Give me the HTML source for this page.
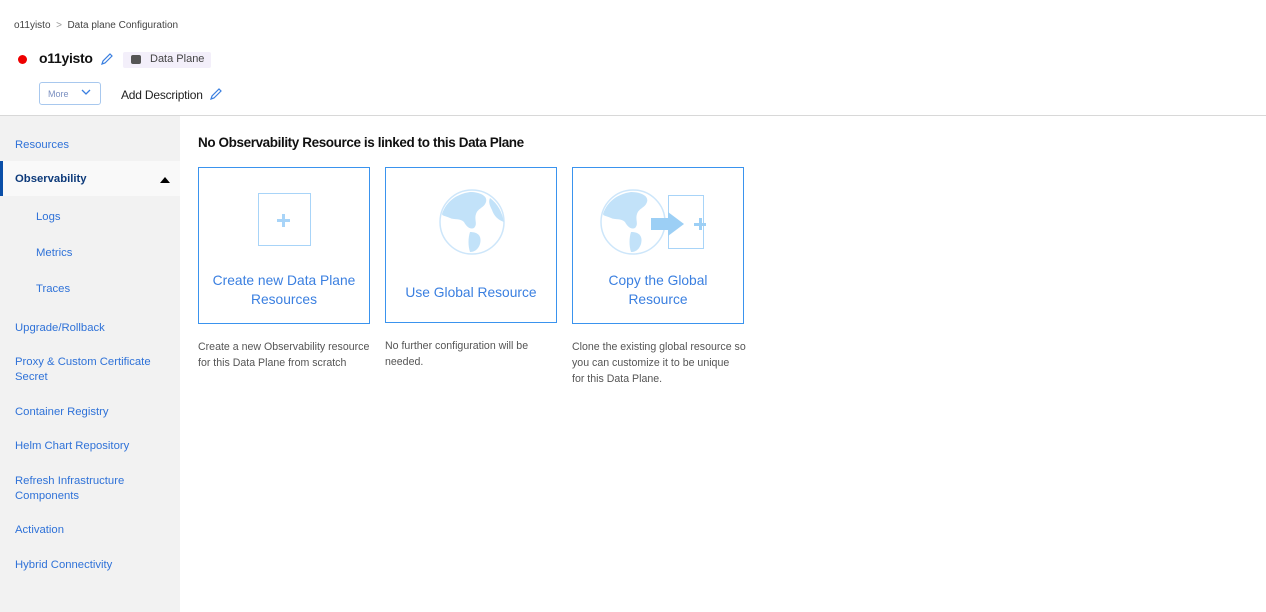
<!DOCTYPE html>
<html><head><meta charset="utf-8"><style>
*{margin:0;padding:0;box-sizing:border-box}
body{width:1266px;height:612px;background:#fff;font-family:"Liberation Sans",sans-serif;position:relative;overflow:hidden;color:#222}
.a{position:absolute;white-space:nowrap}
.side{position:absolute;left:0;top:116px;width:180px;height:496px;background:#f2f2f2}
.nav{position:absolute;left:15px;font-size:11.3px;color:#2f72d8}
.card{position:absolute;top:167px;width:172px;height:157px;border:1px solid #3a93ee;background:#fff}
.ct{position:absolute;left:0;right:0;text-align:center;font-size:13.8px;color:#3a7fe0;line-height:19px}
.desc{position:absolute;font-size:10.6px;color:#555;line-height:16px}
</style></head><body>
<div class="a" style="left:14px;top:20px;font-size:10px;color:#444">o11yisto &nbsp;<span style="color:#999">&gt;</span>&nbsp; Data plane Configuration</div>
<div class="a" style="left:18px;top:55px;width:9px;height:9px;border-radius:50%;background:#e00"></div>
<div class="a" style="left:39px;top:50px;font-size:14px;font-weight:bold;color:#111;letter-spacing:-0.3px">o11yisto</div>
<svg class="a" style="left:100px;top:52px" width="14" height="14" viewBox="0 0 14 14"><path d="M2 12l1-3 7-7 2 2-7 7z" fill="none" stroke="#3a7fe0" stroke-width="1.2"/></svg>
<div class="a" style="left:123px;top:52px;width:88px;height:16px;background:#f3effa;border-radius:2px"></div>
<div class="a" style="left:131px;top:55px;width:10px;height:9px;background:#555;border-radius:2px"></div>
<div class="a" style="left:150px;top:53px;font-size:11px;color:#444">Data Plane</div>
<div class="a" style="left:39px;top:82px;width:62px;height:23px;border:1px solid #a8c8ee;border-radius:3px"></div>
<div class="a" style="left:48px;top:89px;font-size:9px;color:#7a8fc0">More</div>
<svg class="a" style="left:81px;top:88px" width="10" height="8" viewBox="0 0 10 8"><path d="M1 2l4 4 4-4" fill="none" stroke="#3a7fe0" stroke-width="1.3"/></svg>
<div class="a" style="left:121px;top:88px;font-size:12px;color:#222;letter-spacing:-0.2px">Add Description</div>
<svg class="a" style="left:209px;top:87px" width="14" height="14" viewBox="0 0 14 14"><path d="M2 12l1-3 7-7 2 2-7 7z" fill="none" stroke="#3a7fe0" stroke-width="1.2"/></svg>
<div class="a" style="left:0;top:115px;width:1266px;height:1px;background:#d8d8d8"></div>
<div class="side">
<div class="nav" style="top:23px">Resources</div>
<div style="position:absolute;left:0;top:45px;width:180px;height:35px;background:#f9f9f9"></div>
<div style="position:absolute;left:0;top:45px;width:3px;height:35px;background:#0b4fa8"></div>
<div class="nav" style="top:57px;color:#0d3a7a;font-weight:bold">Observability</div>
<div style="position:absolute;left:160px;top:61px;width:0;height:0;border-left:5px solid transparent;border-right:5px solid transparent;border-bottom:6px solid #000"></div>
<div class="nav" style="top:95px;left:36px">Logs</div>
<div class="nav" style="top:131px;left:36px">Metrics</div>
<div class="nav" style="top:167px;left:36px">Traces</div>
<div class="nav" style="top:206px">Upgrade/Rollback</div>
<div class="nav" style="top:239px;line-height:15px">Proxy &amp; Custom Certificate<br>Secret</div>
<div class="nav" style="top:290px">Container Registry</div>
<div class="nav" style="top:324px">Helm Chart Repository</div>
<div class="nav" style="top:358px;line-height:15px">Refresh Infrastructure<br>Components</div>
<div class="nav" style="top:408px">Activation</div>
<div class="nav" style="top:443px">Hybrid Connectivity</div>
</div>
<div class="a" style="left:198px;top:135px;font-size:13.5px;font-weight:bold;color:#111;letter-spacing:-0.4px">No Observability Resource is linked to this Data Plane</div>
<div class="card" style="left:198px">
<div style="position:absolute;left:59px;top:25px;width:53px;height:53px;border:1px solid #a8d4f8"></div>
<div style="position:absolute;left:78px;top:51px;width:13px;height:3px;background:#a8d4f8"></div>
<div style="position:absolute;left:83px;top:46px;width:3px;height:13px;background:#a8d4f8"></div>
<div class="ct" style="top:103px">Create new Data Plane<br>Resources</div>
</div>
<div class="card" style="left:385px;height:156px">
<svg style="position:absolute;left:52px;top:20px" width="68" height="68" viewBox="0 0 68 68"><circle cx="34" cy="34" r="32" fill="#fff" stroke="#cde6fa" stroke-width="1.5"/><path d="M4 26c4-12 14-20 28-22 10 0 18 4 16 10-2 6-8 6-10 12-2 6 2 10-2 14-4 2-8-2-10-6-4-4-10-2-14-4-4-2-8-2-8-4z" fill="#c2e2f9"/><path d="M32 44c8 0 12 4 10 12-2 6-6 8-10 8-2-6-2-14 0-20z" fill="#c2e2f9"/><path d="M52 10c8 6 12 14 14 24-6-2-10-6-12-12-2-4-4-8-2-12z" fill="#c2e2f9"/></svg>
<div class="ct" style="top:115px">Use Global Resource</div>
</div>
<div class="card" style="left:572px">
<svg style="position:absolute;left:26px;top:20px" width="68" height="68" viewBox="0 0 68 68"><circle cx="34" cy="34" r="32" fill="#fff" stroke="#cde6fa" stroke-width="1.5"/><path d="M4 26c4-12 14-20 28-22 10 0 18 4 16 10-2 6-8 6-10 12-2 6 2 10-2 14-4 2-8-2-10-6-4-4-10-2-14-4-4-2-8-2-8-4z" fill="#c2e2f9"/><path d="M32 44c8 0 12 4 10 12-2 6-6 8-10 8-2-6-2-14 0-20z" fill="#c2e2f9"/></svg>
<div style="position:absolute;left:95px;top:27px;width:36px;height:54px;border:1px solid #a8d4f8;background:#fff"></div>
<div style="position:absolute;left:78px;top:50px;width:18px;height:12px;background:#9ccff5"></div>
<div style="position:absolute;left:95px;top:44px;width:0;height:0;border-top:12px solid transparent;border-bottom:12px solid transparent;border-left:16px solid #9ccff5"></div>
<div style="position:absolute;left:121px;top:55px;width:12px;height:3px;background:#9ccff5"></div>
<div style="position:absolute;left:126px;top:50px;width:3px;height:12px;background:#9ccff5"></div>
<div class="ct" style="top:103px">Copy the Global<br>Resource</div>
</div>
<div class="desc" style="left:198px;top:339px">Create a new Observability resource<br>for this Data Plane from scratch</div>
<div class="desc" style="left:385px;top:338px">No further configuration will be<br>needed.</div>
<div class="desc" style="left:572px;top:339px">Clone the existing global resource so<br>you can customize it to be unique<br>for this Data Plane.</div>
</body></html>
